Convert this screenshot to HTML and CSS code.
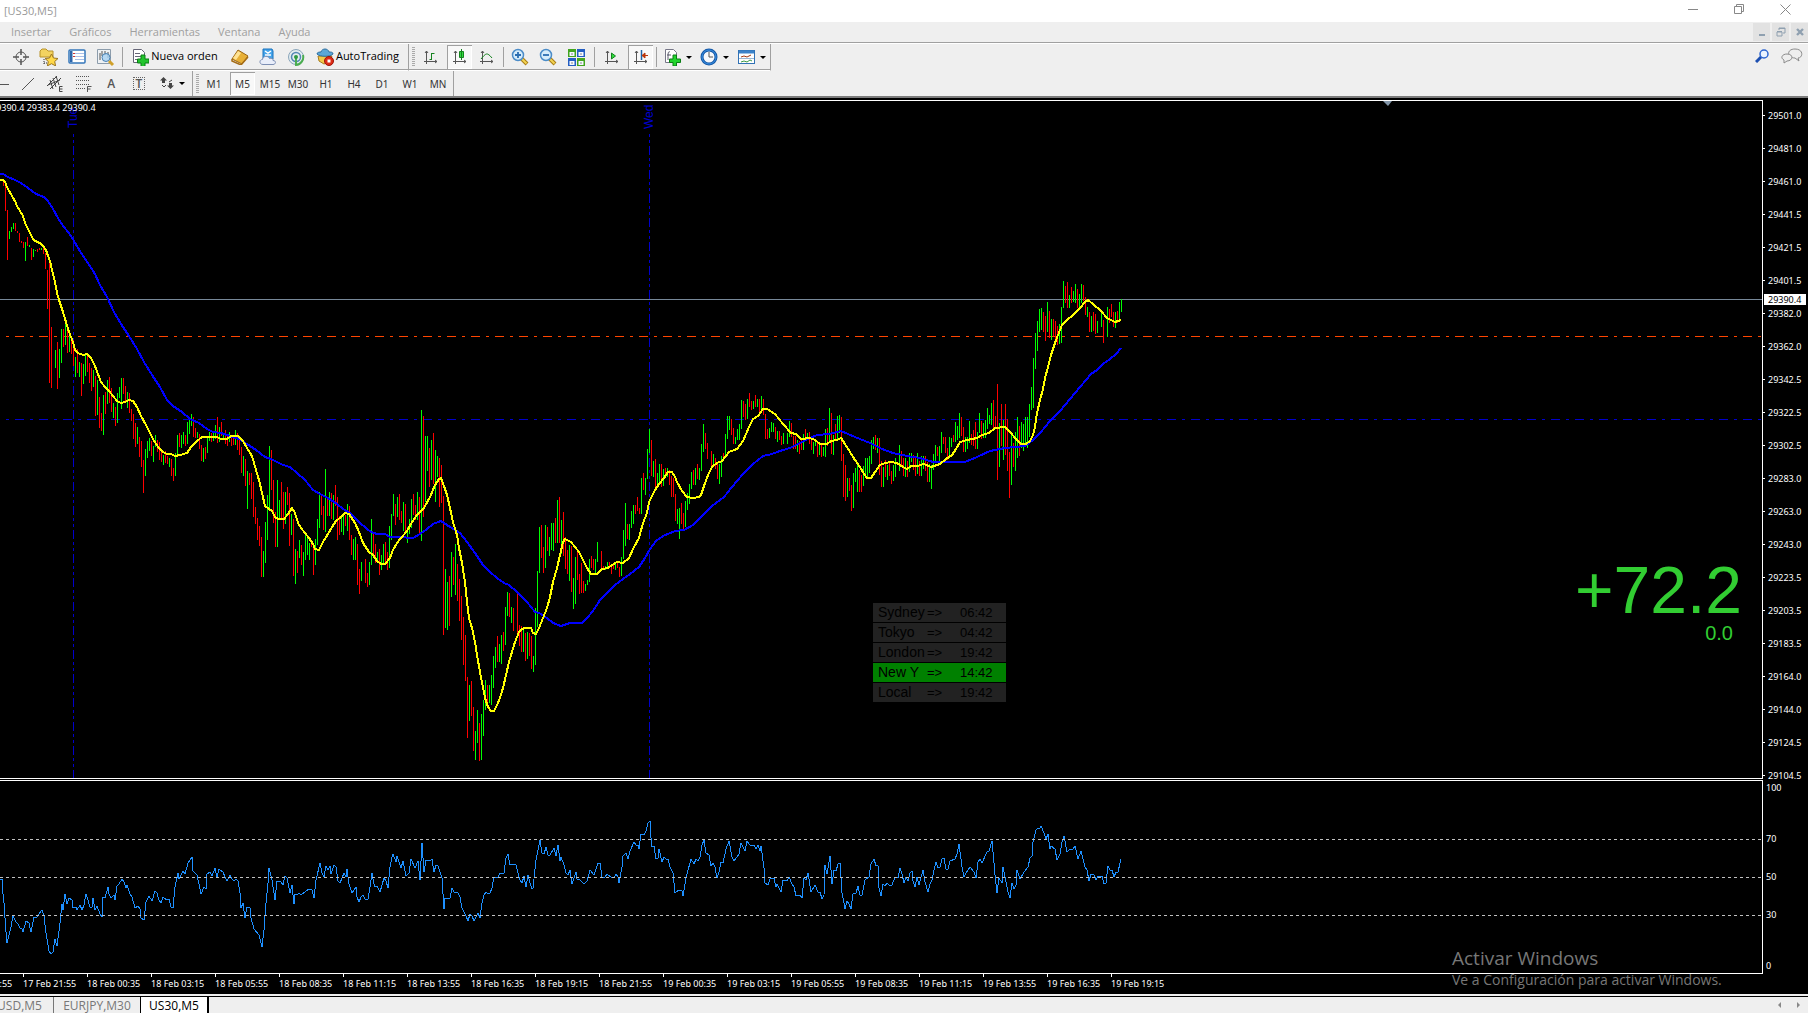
FILE: index.html
```html
<!DOCTYPE html>
<html lang="es">
<head>
<meta charset="utf-8">
<title>[US30,M5]</title>
<link rel="stylesheet" href="styles.css">
<script src="chart.js" defer></script>
</head>
<body>
<header class="titlebar">
  <span class="title">[US30,M5]</span>
  <div class="window-controls">
    <button aria-label="Minimizar"><svg width="11" height="11"><path d="M0 5.5h10"/></svg></button>
    <button aria-label="Restaurar"><svg width="11" height="11"><path d="M.5 2.5h7v7h-7zM2.500 2.500v-2h7v7h-2"/></svg></button>
    <button aria-label="Cerrar"><svg width="11" height="11"><path d="M.5.5l10 10M10.500.5l-10 10"/></svg></button>
  </div>
</header>
<nav class="menubar">
  <a href="#">Insertar</a><a href="#">Gráficos</a><a href="#">Herramientas</a><a href="#">Ventana</a><a href="#">Ayuda</a>
  <div class="mdi-controls">
    <button aria-label="Minimizar gráfico"><svg width="10" height="10"><path d="M2 8h6" stroke-width="2"/></svg></button>
    <button aria-label="Restaurar gráfico"><svg width="10" height="10"><path d="M1 5h5v4H1zM1 4.500h5M3 3V1h6v5H7M3 1.500h6"/></svg></button>
    <button aria-label="Cerrar gráfico"><svg width="10" height="10"><path d="M2 2l6 6M8 2L2 8" stroke-width="2.400"/></svg></button>
  </div>
</nav>

<div class="toolbars">
  <div class="toolrow">
    <div class="toolgroup standard">
      <button class="tool" aria-label="Cursor en cruz"><svg width="18" height="18" fill="none" stroke="#555"><circle cx="9" cy="9" r="5"/><path d="M9 1v6M9 11v6M1 9h6M11 9h6" stroke-width="1.500"/></svg></button>
      <button class="tool" aria-label="Perfiles"><svg width="20" height="18"><path d="M1 3l2-2h4l2 2h5v6H1z" fill="#f3d360" stroke="#b8932a"/><path d="M5 11v5M5 15h4" stroke="#333" stroke-dasharray="1 1"/><path d="M12.500 6l2 4 4.500.5-3.300 3 .9 4.400-4.100-2.200-4.100 2.200.9-4.400-3.300-3 4.500-.5z" fill="#ffd94a" stroke="#9a7420"/></svg></button>
      <button class="tool" aria-label="Observación del mercado"><svg width="18" height="16"><rect x="1" y="1" width="16" height="13" rx="1" fill="#fff" stroke="#3577bb" stroke-width="1.500"/><path d="M2 2h2.500v11H2z" fill="#2d66aa"/><path d="M7 4.500h9M7 7.500h9M7 10.500h9" stroke="#a9bfe8"/><path d="M5 4.500h2M5 7.500h2" stroke="#c33"/></svg></button>
      <button class="tool" aria-label="Ventana de datos"><svg width="19" height="19"><path d="M1.500 1.500h13v14h-13z" fill="#eef1f4" stroke="#8c9cab"/><path d="M4 5v7M6 3v5M9 3v4M12 4v6" stroke="#555"/><circle cx="10" cy="9.500" r="4" fill="#a7d2f2" fill-opacity=".8" stroke="#4a82b4"/><path d="M13 13l4 4" stroke="#d0a02a" stroke-width="3"/></svg></button>
      <span class="separator"></span>
      <button class="tool wide" aria-label="Nueva orden"><svg width="18" height="18"><path d="M2.500 1.500h8l3 3v10h-11z" fill="#fff" stroke="#667"/><path d="M4 5.500h5M4 8.500h6M4 11.500h4" stroke="#667"/><path d="M10 7h4v4h4v4h-4v3.500h-4V15H6.500v-4H10z" fill="#22c42d" stroke="#0b7d16"/></svg><span>Nueva orden</span></button>
      <button class="tool" aria-label="MetaEditor"><svg width="18" height="16"><path d="M1 10L7 1l10 6-6 8z" fill="#e8b037" stroke="#9a6514"/><path d="M2 9l5-7 3 2-5 7z" fill="#ffe394"/><path d="M1 10v2l9 4 7-8" fill="none" stroke="#a56c16" stroke-width="1.500"/></svg></button>
      <button class="tool" aria-label="MQL5"><svg width="18" height="18"><path d="M4 1h9l1 2v8H4z" fill="#46a4ea" stroke="#1972bd"/><path d="M6 3l3 2 3-2M6 7h6" stroke="#fff" fill="none" stroke-width="1.500"/><path d="M4 16.500c-4 0-4-5-.5-5 .5-4 6-4 7-1 2-1 4 .5 3.500 2 3.500 0 3 4 0 4z" fill="#e9eefa" stroke="#7d8fb4"/></svg></button>
      <button class="tool" aria-label="Señales"><svg width="18" height="18" fill="none"><circle cx="9" cy="9" r="7.500" fill="#e3ecef" stroke="#8ba6bb"/><circle cx="9" cy="9" r="4.500" stroke="#5488b4" stroke-width="1.500"/><path d="M9 9v8a8 8 0 0 0 7-10" stroke="#4bad50" stroke-width="2"/><circle cx="9" cy="9" r="2" fill="#2f9a43"/></svg></button>
      <button class="tool wide auto"><svg width="18" height="18"><path d="M2 8h14l-3 6-5 2-5-3z" fill="#f2c94a" stroke="#a57b1e"/><path d="M1 6c0-2 3-2 4-2 1-4 7-4 8 0 2 0 4 0 4 2-3 3-13 3-16 0z" fill="#5ba7d8" stroke="#2d6e9f"/><circle cx="13" cy="13" r="4.500" fill="#de2c17" stroke="#9d1408"/><path d="M11.500 11.500h3v3h-3z" fill="#fff"/></svg><span>AutoTrading</span></button>
    </div>
    <div class="toolgroup charts">
      <span class="grip"></span>
      <button class="tool" aria-label="Gráfico de barras"><svg class="axis" width="16" height="16"><path d="M3.500 2v13M1 12.500h13M2 4l1.500-2L5 4M12 11l2 1.500-2 1.500"/><path class="green" d="M8.500 4v7M8.500 4.500h3M6.500 10.500h2"/></svg></button>
      <button class="tool active" aria-label="Velas japonesas"><svg class="axis" width="16" height="16"><path d="M3.500 2v13M1 12.500h13M2 4l1.500-2L5 4M12 11l2 1.500-2 1.500"/><path class="green" fill="#2fdc3e" d="M9.500 0v11M7.500 2.500h4v6h-4z"/></svg></button>
      <button class="tool" aria-label="Gráfico de línea"><svg class="axis" width="16" height="16"><path d="M3.500 2v13M1 12.500h13M2 4l1.500-2L5 4M12 11l2 1.500-2 1.500"/><path class="green" d="M2 10c5-6 6-7 11-1"/></svg></button>
      <span class="separator"></span>
      <button class="tool" aria-label="Acercar"><svg width="18" height="18"><path d="M10 10l6 6" stroke="#a97d17" stroke-width="4"/><path d="M10 10l5.500 5.500" stroke="#f3d453" stroke-width="2"/><circle cx="7" cy="7" r="5.500" fill="#d5ecfb" stroke="#4b8cc8" stroke-width="1.500"/><path d="M4 7h6M7 4v6" stroke="#2b6eb2" stroke-width="1.800"/></svg></button>
      <button class="tool" aria-label="Alejar"><svg width="18" height="18"><path d="M10 10l6 6" stroke="#a97d17" stroke-width="4"/><path d="M10 10l5.500 5.500" stroke="#f3d453" stroke-width="2"/><circle cx="7" cy="7" r="5.500" fill="#d5ecfb" stroke="#4b8cc8" stroke-width="1.500"/><path d="M4 7h6" stroke="#2b6eb2" stroke-width="1.800"/></svg></button>
      <button class="tool" aria-label="Mosaico"><svg width="17" height="17"><path d="M0 0h8v8H0zM9 9h8v8H9z" fill="#42a51e"/><path d="M9 0h8v8H9zM0 9h8v8H0z" fill="#235ec2"/><path d="M1.500 3h5v4h-5zM10.500 3h5v4h-5zM1.500 12h5v4h-5zM10.500 12h5v4h-5z" fill="#f4f8ff"/><path d="M3 5h2M12 5h2M3 14h2M12 14h2" stroke="#888"/></svg></button>
      <span class="separator spaced"></span>
      <button class="tool" aria-label="Desplazamiento automático"><svg class="axis" width="16" height="16"><path d="M3.500 2v13M1 12.500h13M2 4l1.500-2L5 4M12 11l2 1.500-2 1.500"/><path class="green" fill="#2fdc3e" d="M7.500 4l4 3-4 3z"/></svg></button>
      <button class="tool active" aria-label="Desplazar gráfico"><svg class="axis" width="16" height="16"><path d="M3.500 2v13M1 12.500h13M2 4l1.500-2L5 4M12 11l2 1.500-2 1.500"/><path d="M8.500 1v10" stroke="#1c62a5" stroke-width="1.500"/><path d="M15 6.500h-5M12 4l-3 2.500L12 9z" stroke="#b93409" fill="#b93409"/></svg></button>
      <span class="separator"></span>
      <button class="tool drop" aria-label="Indicadores"><svg width="17" height="18"><path d="M1.500 1.500h8l3 3v10h-11z" fill="#fff" stroke="#778"/><path d="M6 4c-2-1-2 1-2 8M3 7h4" stroke="#556" fill="none"/><path d="M9 7h3.500v4h4v3.500h-4v3.500H9v-3.500H5.500V11H9z" fill="#22d42d" stroke="#0b7d16"/></svg><i class="caret"></i></button>
      <button class="tool drop" aria-label="Periodos"><svg width="18" height="18"><circle cx="9" cy="9" r="7" fill="#f7f9fc" stroke="#1558a6" stroke-width="3"/><circle cx="9" cy="9" r="7" fill="none" stroke="#3c93e6"/><path d="M9 4v5h4" fill="none" stroke="#555"/></svg><i class="caret"></i></button>
      <button class="tool drop" aria-label="Plantillas"><svg width="17" height="16"><rect x=".5" y="1.500" width="16" height="13" fill="#fff" stroke="#3172b5"/><path d="M1 3h15" stroke="#3b82c9" stroke-width="3"/><path d="M3 8l3-1 3 1 4-2" fill="none" stroke="#a33a13"/><path d="M1 9.500h15" stroke="#9bb7d4"/><path d="M3 13l3-1 3 1 3-2 2 1" fill="none" stroke="#3c9a43"/></svg><i class="caret"></i></button>
    </div>
    <div class="corner">
      <button class="tool" aria-label="Buscar"><svg width="15" height="14" fill="none"><path d="M1 13l6-6" stroke="#1c4fb1" stroke-width="3"/><circle cx="9" cy="5" r="4" fill="#eaf3ff" stroke="#2d66d1" stroke-width="1.500"/></svg></button>
      <button class="tool" aria-label="Comunidad"><svg width="22" height="16" fill="#eee" stroke="#8b8b8b"><path d="M14 1c9 0 8 9 3 9l1 3-4-3c-8 0-9-9 0-9z"/><path d="M6 6c7 0 6 7 0 7l-3 2v-3C-1 10 1 6 6 6z"/></svg></button>
    </div>
  </div>
  <div class="toolrow">
    <div class="toolgroup drawing">
      <button class="tool" aria-label="Línea horizontal"><svg width="16" height="16" stroke="#555"><path d="M0 8.500h16"/></svg></button>
      <button class="tool" aria-label="Línea de tendencia"><svg width="14" height="14" stroke="#555"><path d="M1 13L13 1"/></svg></button>
      <button class="tool" aria-label="Canal equidistante"><svg width="17" height="18" stroke="#444" fill="none"><path d="M0 11L10 1M3 14L14 3M3 5l3 9M6 3l3 9M9 1l3 9M1 10l12-5"/><path d="M15.500 11.500h-3v5h3M12.500 14h3"/></svg></button>
      <button class="tool" aria-label="Fibonacci"><svg width="16" height="18" stroke="#555" fill="none"><path d="M0 1.500h14M0 5.500h14M0 9.500h14M0 13.500h9" stroke-dasharray="1 1"/><path d="M11.500 17v-5.500h4M11.500 14h3"/></svg></button>
      <button class="tool letter" aria-label="Texto">A</button>
      <button class="tool letter boxed" aria-label="Etiqueta"><span>T</span></button>
      <button class="tool drop arrows" aria-label="Flechas"><svg width="14" height="13" fill="#444"><path d="M0 3.500L3.500 0 7 3.500H5V6H2V3.500zM7 8.500h2V6h3v2.500h2L10.500 12z"/><path d="M2 8l2 2 2-2M12 3L9 5" fill="none" stroke="#444"/></svg><i class="caret"></i></button>
    </div>
    <div class="toolgroup periods">
      <span class="grip"></span>
      <button>M1</button><button class="active">M5</button><button>M15</button><button>M30</button><button>H1</button><button>H4</button><button>D1</button><button>W1</button><button>MN</button>
    </div>
  </div>
</div>

<main class="workspace">
  <section class="pane price-pane">
    <div class="plot">
      <svg class="canvas" id="price">
        <path class="day" d="M73.500 33V677M649.500 33V677"/>
        <text class="day-name" transform="translate(77 27) rotate(-90)">Tue</text>
        <text class="day-name" transform="translate(653 28) rotate(-90)">Wed</text>
        <line class="level blue" x1="6" x2="100%" y1="318.500" y2="318.500"/>
        <line class="level orange" x1="6" x2="100%" y1="235.500" y2="235.500"/>
        <line class="last-price" x1="0" x2="100%" y1="198.500" y2="198.500"/>
        <path class="bars up" id="up"/><path class="bars down" id="down"/>
        <path class="average slow" id="slow"/><path class="average fast" id="fast"/>
        <path d="M1383 0h9l-4 5z" fill="#8295a8"/>
      </svg>
      <p class="ohlc">29390.4 29383.4 29390.4</p>
      <table class="sessions">
        <tr><th>Sydney</th><td>=&gt;</td><td>06:42</td></tr>
        <tr><th>Tokyo</th><td>=&gt;</td><td>04:42</td></tr>
        <tr><th>London</th><td>=&gt;</td><td>19:42</td></tr>
        <tr class="open"><th>New Y</th><td>=&gt;</td><td>14:42</td></tr>
        <tr><th>Local</th><td>=&gt;</td><td>19:42</td></tr>
      </table>
      <div class="profit"><strong>+72.2</strong><span>0.0</span></div>
    </div>
    <div class="scale">
      <ol>
        <li>29501.0</li><li>29481.0</li><li>29461.0</li><li>29441.5</li><li>29421.5</li><li>29401.5</li><li>29382.0</li><li>29362.0</li><li>29342.5</li><li>29322.5</li><li>29302.5</li><li>29283.0</li><li>29263.0</li><li>29243.0</li><li>29223.5</li><li>29203.5</li><li>29183.5</li><li>29164.0</li><li>29144.0</li><li>29124.5</li><li>29104.5</li>
      </ol>
      <span class="quote">29390.4</span>
    </div>
  </section>
  <section class="pane rsi-pane">
    <div class="plot">
      <svg class="canvas">
        <path class="rsi" id="rsi"/>
        <g class="rsi-level"><line x2="100%" y1="58.500" y2="58.500"/><line x2="100%" y1="96.500" y2="96.500"/><line x2="100%" y1="134.500" y2="134.500"/></g>
      </svg>
    </div>
    <div class="scale rsi-scale"><span>100</span><span>70</span><span>50</span><span>30</span><span>0</span></div>
  </section>
  <ol class="timeline">
    <li>17 Feb 18:55</li><li>17 Feb 21:55</li><li>18 Feb 00:35</li><li>18 Feb 03:15</li><li>18 Feb 05:55</li><li>18 Feb 08:35</li><li>18 Feb 11:15</li><li>18 Feb 13:55</li><li>18 Feb 16:35</li><li>18 Feb 19:15</li><li>18 Feb 21:55</li><li>19 Feb 00:35</li><li>19 Feb 03:15</li><li>19 Feb 05:55</li><li>19 Feb 08:35</li><li>19 Feb 11:15</li><li>19 Feb 13:55</li><li>19 Feb 16:35</li><li>19 Feb 19:15</li>
  </ol>
  <aside class="activation"><strong>Activar Windows</strong><span>Ve a Configuración para activar Windows.</span></aside>
</main>

<footer class="tabs">
  <button>USD,M5</button><button>EURJPY,M30</button><button class="current">US30,M5</button>
  <div class="tab-scroll"><button class="prev" aria-label="Anterior"></button><button class="next" aria-label="Siguiente"></button></div>
</footer>
</body>
</html>
```
FILE: styles.css
```css
* { box-sizing: border-box; }
body { margin: 0; height: 100vh; display: flex; flex-direction: column; overflow: hidden; background: #efefef; color: #000; font: 11px/16px "Open Sans", "Noto Sans", sans-serif; }
button { border: 0; padding: 0; margin: 0; background: none; font: inherit; color: inherit; display: flex; align-items: center; justify-content: center; }
ol, p { margin: 0; padding: 0; list-style: none; }
svg { display: block; flex: none; }

.titlebar { flex: none; height: 22px; background: #fff; display: flex; justify-content: space-between; color: #999; }
.title { padding: 3px 0 0 4px; }
.window-controls { display: flex; height: 18px; }
.window-controls button { width: 46px; }
.window-controls svg { fill: none; stroke: #888; }
.menubar { flex: none; height: 22px; display: flex; align-items: flex-start; gap: 18px; padding-left: 11px; color: #a0a0a0; border-bottom: 1px solid #fff; box-shadow: inset 0 -1px #a0a0a0; }
.menubar a { color: inherit; text-decoration: none; padding-top: 2px; }
.mdi-controls { margin-left: auto; display: flex; gap: 2px; padding-top: 1px; }
.mdi-controls button { width: 17px; height: 18px; background: #e2e2e2; }
.mdi-controls svg { fill: none; stroke: #8fa0b0; }

.toolbars { flex: none; border-bottom: 2px solid #7c7c7c; }
.toolrow { display: flex; height: 25px; }
.toolrow:first-child { height: 27px; }
.toolgroup { display: flex; align-items: center; border-right: 1px solid #a0a0a0; }
.toolrow:first-child .toolgroup { border-bottom: 1px solid #fff; box-shadow: inset 0 -1px #a0a0a0; }
.tool { width: 28px; height: 24px; }
.standard { width: 409px; padding-left: 7px; }
.standard .separator { margin-right: 4px; }
.separator { width: 1px; height: 20px; background: #a0a0a0; margin: 0 3px; }
.wide { width: 95px; gap: 2px; margin-right: 4px; }
.auto { margin: 0; }
.wide span { padding-bottom: 2px; }
.grip { width: 3px; height: 20px; margin-left: 3px; background: repeating-linear-gradient(#aaa 0 1px, #efefef 1px 2px); }
.charts { width: 362px; }
.charts .grip { margin-right: 2px; }
.charts .separator { margin: 0 2px; }
.charts .spaced { margin: 0 3px 0 4px; }
.active { background: #f8f8f8; box-shadow: inset 1px 1px #a0a0a0, inset -1px -1px #fff; }
.tool.active { width: 25px; margin: 0 1px 0 2px; }
.axis { fill: none; stroke: #555; }
.axis .green { stroke: #15831f; }
.drop { width: 37px; gap: 5px; }
.caret { border: 3px solid transparent; border-top-color: #000; border-bottom: 0; }
.corner { margin-left: auto; display: flex; gap: 2px; padding-right: 2px; }
.drawing { width: 193px; }
.drawing .tool:first-child { margin-left: -13px; }
.letter { font-size: 12px; font-weight: 600; color: #555; }
.boxed span { width: 12px; height: 13px; border: 1px dotted #666; line-height: 11px; }
.arrows { width: 40px; }
.periods { width: 261px; font: 10px/14px "Noto Sans", sans-serif; color: #333; }
.periods button { width: 28px; height: 23px; }
.periods .grip { margin-right: 1px; }
.periods .active { width: 25px; margin: 0 1px 0 2px; }

.workspace { flex: 1; min-height: 0; position: relative; display: flex; flex-direction: column; padding-top: 2px; background: #000; color: #fff; font: 9px/11px "Noto Sans", sans-serif; overflow: hidden; }
.pane { display: flex; }
.plot { flex: 1; min-width: 0; position: relative; border: 1px solid #fff; border-left: 0; overflow: hidden; }
.canvas { width: 100%; height: 100%; }
.scale { width: 45px; position: relative; }
.price-pane { flex: 1; min-height: 0; }
.price-pane ol { margin-top: -1px; }
.price-pane li { padding: 11px 0 11px 5px; background: linear-gradient(#fff, #fff) 0 16px / 2px 1px no-repeat; }
.price-pane li:last-child { padding-bottom: 0; }
.quote { position: absolute; left: 1px; top: 194px; width: 42px; padding-left: 4px; background: #fff; color: #000; }
.rsi-pane { flex: none; height: 194px; margin-top: 1px; }
.rsi-scale { display: grid; grid-template-rows: 51px 38px 38px 51px 11px; padding: 2px 0 0 3px; }
.timeline { flex: none; height: 20px; display: flex; margin-left: -41px; }
.timeline li { flex: none; width: 64px; height: 15px; padding: 4px 0 0; white-space: nowrap; background: linear-gradient(#fff, #fff) 0 0 / 1px 3px no-repeat; }

.day, .level, .last-price, .average, .rsi, .rsi-level { fill: none; shape-rendering: crispEdges; }
.day { stroke: #0000cd; stroke-dasharray: 9 3 3 3 3 3; stroke-dashoffset: 12px; }
.day-name { fill: #0000cd; font: 12px "Liberation Sans", sans-serif; }
.level { stroke-dasharray: 3 6 9 6; }
.blue { stroke: #0000cd; }
.orange { stroke: #ff4500; }
.last-price { stroke: #778899; }
.bars { shape-rendering: crispEdges; }
.up { fill: #00ff00; }
.down { fill: #ff0000; }
.average { stroke-width: 2; }
.slow { stroke: #0000ff; }
.fast { stroke: #ffff00; }
.rsi { stroke: #1e90ff; }
.rsi-level { stroke: #c0c0c0; stroke-dasharray: 3 3; }

.ohlc { position: absolute; left: -9px; top: 1px; white-space: nowrap; }
.sessions { position: absolute; left: 873px; top: 501px; width: 133px; border-spacing: 0 1px; color: #000; font: 14px/19px "Liberation Sans", sans-serif; }
.sessions tr { background: #222; height: 19px; }
.sessions th { width: 54px; padding: 0 0 0 5px; font-weight: 400; text-align: left; white-space: nowrap; }
.sessions td { padding: 0; font-size: 13px; }
.sessions td:nth-child(2) { width: 33px; }
.sessions .open { background: #008000; }
.profit { position: absolute; right: 20px; top: 458px; display: flex; flex-direction: column; align-items: flex-end; color: #32cd32; font: 20px/24px "Liberation Sans", sans-serif; }
.profit strong { font-weight: 400; font-size: 66px; line-height: 62px; }
.profit span { padding-right: 9px; }
.activation { position: absolute; right: 81px; bottom: 4px; width: 275px; display: flex; flex-direction: column; color: #777; font: 14px/20px "Open Sans", sans-serif; white-space: nowrap; }
.activation strong { font-weight: 400; font-size: 19px; line-height: 24px; }

.tabs { flex: none; height: 19px; display: flex; border-top: 2px solid #eee; box-shadow: inset 0 1px #000; color: #777; padding-top: 1px; font-size: 12px; }
.tabs > button { height: 16px; padding-top: 2px; }
.tabs > button:first-child { width: 54px; padding-right: 14px; border-right: 1px solid #777; }
.tabs > button:nth-child(2) { width: 86px; }
.tabs .current { width: 69px; background: #fff; color: #000; border: solid #000; border-width: 0 2px 0 1px; }
.tab-scroll { margin-left: auto; display: flex; align-items: center; gap: 16px; padding-right: 8px; }
.tab-scroll button { border: 3px solid transparent; }
.tab-scroll .prev { border-right-color: #888; border-left: 0; }
.tab-scroll .next { border-left-color: #888; border-right: 0; }
```
FILE: chart.js
```javascript
// Price bars, oldest first, one every two pixels. "r"/"g" is the direction,
// followed by high-low in thirds of a pixel from the block's own top offset.
// "-" is an interval without a visible bar.
const barBlocks = [
  { top: 177, bars: `r60-78 r78-153 r150-300 g213-237 g201-216 g189-207 r189-213 r213-219 r219-246 r243-249 r246-264 g246-303
r231-258 g255-261 r264-300 g267-291 g270-273 r267-276 r264-270 g264-270 r264-282 r279-327 r330-447 r300-669 r501-684 - g570-624
r546-687 g567-654 g507-609 r507-561 g480-555 r492-579 g525-576 r540-582 r540-618 g591-651 r567-639 g606-651 r609-708 g612-672
g585-648 r585-636 r609-669 r624-693 g630-681 r648-768 g660-765 r711-804 r759-813 g705-825 r696-762 g660-732 r651-729 r684-756
g729-774 r741-798 g699-789 g681-714 g654-747 r654-702 r678-723 g696-744 r699-759 r747-783 r762-837 r789-861 g801-852 r831-891
r843-921 r900-999 g867-948 g843-894 g834-873 r843-888 g858-906 g825-861 r840-876 r846-900 r870-906 g885-915 r873-909 r888-912
g894-921 r897-948 r924-963 g879-948 g825-882 r819-861 g825-864 g816-852 r825-858 g786-852 g777-822 g762-798 r771-831 r804-834
g816-834 r822-867 r855-903 g864-906 r861-897 g831-879 g816-843 r819-846 g819-843 g795-837 r771-849 g801-846 r786-828 g822-834
r810-852 r828-858 g816-846 r828-858 r831-855 g810-855 r819-870 r840-885 r861-939 g888-948 r897-978 g933-1047 r939-975 r939-1017
r966-1071 r1041-1092 r1074-1140 r1098-1158 r1131-1251 g1173-1251 g1086-1209 g1005-1140 g858-1050 r870-990 r960-1089 r1056-1161
g960-1161 g1020-1077 r966-1077 r996-1107 g996-1092 r981-1035 r999-1158 g1062-1125 r1077-1248 g1167-1272 r1173-1239 g1140-1194
r1155-1215 g1176-1248 g1119-1200 g1128-1185 g1149-1200 r1143-1160 r1149-1245 g1137-1215 g1077-1155 g996-1104 r1005-1065
r1038-1110 g927-1116 r1011-1068 g996-1068 r999-1077 g1005-1080 r975-1038 r1011-1140 r1068-1125 g1074-1116 g1062-1125
r1065-1098 g1032-1113 r1038-1140 r1125-1185 g1137-1200 g1131-1200 r1152-1275 r1227-1302 g1206-1263 - r1197-1269 r1239-1281
g1206-1275 g1077-1215 r1119-1185 r1152-1209 g1176-1206 r1167-1245 g1185-1230 g1152-1212 r1146-1206 r1176-1230 g1098-1224
g1062-1140 g1002-1068 r1032-1095 g1011-1071 r1002-1080 r1053-1089 g1026-1113 r1032-1113 g1101-1149 g1077-1122 g1017-1104
r1002-1065 r1035-1080 g996-1080 r1011-1119 g750-1143 r768-1071 g828-1026 g828-933 r864-981 g840-960 r819-972 g870-1026
g888-951 r894-1041 r915-1029` },
  { top: 837, bars: `r348-765 g567-744 g606-750 r588-738 g516-651 r531-615 g492-645 r552-663 r597-723 r648-780 r711-855
r765-903 r891-1074 g915-1023 r903-1008 r981-1113 g1053-1140 g990-1089 r1029-1143 g1002-1140 g960-1068 g900-990 r915-975
g915-969 g885-975 g828-924 g801-864 r768-846 g792-846 g765-852 r756-813 g681-795 g636-708 r639-711 g681-729 r684-753 -
r636-765 r735-798 r738-816 g741-816 r759-843 g756-837 r759-828 r768-867 g828-876 g684-855 g573-741 g441-579 r435-534
r501-579 g435-564 r441-513 g471-528 g429-510 g429-513 r414-489 g360-489 r351-489 g420-522 r396-528 r471-567 r510-582
g495-603 r498-636 g594-687 g531-672 r510-600 r582-642 r549-639 r603-639 g612-633 g600-615 g537-606 r528-564 r537-570
g537-579 g486-546 - r513-564 r558-570 g558-570 g546-564 r546-564 r558-582 r552-567 g546-570 r546-564 r561-591 g531-588
g450-537 g369-498 r432-477 g432-480 g393-444 g375-432 r375-402 r351-393 r384-402 g294-402 r279-330 g294-345 g207-297
g147-219 r180-288 g243-291 r237-321 g279-321 g252-312 r252-321 g267-318 r264-282 g264-291 r270-315 r288-351 r294-351
r342-423 g387-432 g384-477 r369-432 r399-447 g363-441 g339-390 g312-372 g276-327 r270-315 g264-315 r252-297 g264-300
g192-273 g132-216 r159-207 r189-237 - r213-261 g222-258 r234-267 r249-297 g252-312 g228-291 r219-237 g162-231 g108-177
g108-150 r117-165 r144-192 g171-192 g147-180 g132-180 g60-147 r63-111 r72-120 g57-117 r39-81 r63-90 g63-87 r45-81 g57-81
r57-99 g48-87 r57-105 r102-177 r147-177 g144-174 g126-156 g129-156 r141-177 g153-186 r153-180 r168-195 g159-192 -
g159-192 g123-171 r129-171 r168-207 r168-207 g180-216 r183-222 r174-210 g162-210 r147-177 g159-177 r156-192 r174-210
g186-222 g177-198 r183-231 g189-225 r189-231 g201-228 g147-231 r144-198 g84-183 r99-222 g165-225 r132-180 g108-183
g105-159 r111-243 r222-351 r255-363 g294-351 r294-333 r315-393 g279-384 g264-306 g249-336 r270-336 r285-336 g258-318
g234-291 g234-291 g228-279 g180-252 g171-207 r165-210 g174-219 r174-285 r243-321 g261-321 r240-291 g255-300 r249-288
r273-312 g255-303 g234-291 - g195-273 r213-261 r234-288 g234-291 r243-291 g219-276 g219-246 r225-270 r231-288 g219-282
r243-288 g228-288 g228-267 r228-273 r246-306 g252-306 g255-327 g222-270 g195-243 r201-228 g198-243 g156-219 r171-192
r171-219 r204-240 g171-228 g174-201 r165-186 g126-186 g138-180 g99-174 r111-168 r141-216 g171-216 g171-207 g123-189
r162-195 r150-198 r126-207 g156-207 g99-159 r123-177 g129-174 g120-174 g84-147 g105-132 g69-135 r60-144 r108-147 r12-300
g129-261 r72-198 g120-240 r72-225 r117-273 r216-354 g165-315 r189-261 g156-273 g111-234 r138-228 g126-204 g132-213
g111-192 g111-204 g72-171 g21-90` },
  { top: 507, bars: `g264-414 g189-297 g153-243 g117-186 g114-180 r126-186 r138-213 g96-186 r123-204 g147-210 r147-198
r153-207 r168-225 g162-222 g111-219 g33-114 r48-99 r36-114 g75-114 r51-99 g63-96 g42-99 r57-114 g72-117 g42-99 r45-93
r81-135 g111-141 r126-186 g138-186 r126-183 r132-192 g153-189 - g123-171 r150-219 - g111-201 r117-159 r102-141 r126-171
g126-174 r123-159 g96-150 g87-126` }
];

const paths = { g: "", r: "" };
let x = 3;
for (const block of barBlocks) {
  for (const bar of block.bars.split(/\s+/)) {
    if (bar !== "-") {
      const [high, low] = bar.slice(1).split("-").map(v => Math.round((block.top + Number(v)) / 3));
      paths[bar[0]] += `M${x} ${high}h1v${low - high}h-1z`;
    }
    x += 2;
  }
}
document.getElementById("up").setAttribute("d", paths.g);
document.getElementById("down").setAttribute("d", paths.r);

// Curves are stored in blocks, each with its origin and its units per pixel.
function drawCurve(id, blocks) {
  const points = blocks.flatMap(b => b.points.split(/\s+/).map(p => {
    const [px, py] = p.split(",").map(Number);
    return Math.round(b.x + px / b.sx) + " " + Math.round(b.y + py / 3);
  }));
  document.getElementById(id).setAttribute("d", "M" + points.join("L"));
}

drawCurve("fast", [
  { x: 0, y: 59, sx: 3, points: `0,60 10,60 16,66 22,81 28,93 34,103 40,113 46,124 52,137 60,152 68,168 76,190 84,207 92,225 98,236 106,242 114,246 122,253 130,259 138,270 145,287 150,303 156,330 164,367 172,400 180,430 188,456 198,486 208,517 218,545 226,570 234,578 248,585 262,582 272,595 284,617 294,641 304,667 314,680 328,692 340,709 350,724 362,729 374,727 386,719 398,722 412,742 424,768 438,795 450,819 462,842 476,864 490,876 500,881 512,882 524,888 540,885 560,880 574,860 590,843 606,831 650,831 662,836 682,836 694,829 714,829 730,843 742,864 756,889 768,929 778,960 786,998 796,1037 806,1048 816,1053 826,1070 834,1077 852,1077 864,1062 876,1045 886,1060 894,1088 904,1105 916,1118 926,1133 938,1152 944,1168 956,1170 970,1145 984,1122 996,1102 1008,1084 1022,1070 1036,1058 1048,1062 1066,1088 1076,1115 1090,1150 1106,1175 1118,1186 1130,1203 1142,1211 1156,1211 1170,1195 1180,1170 1190,1148 1204,1134 1220,1114 1236,1087 1252,1066 1272,1044 1290,1010 1306,975 1316,957` },
  { x: 400, y: 279, sx: 3, points: `124,293 132,318 142,346 150,385 160,425 170,465 178,505 186,550 194,605 202,665 208,715 216,745 224,787 232,825 240,875 248,920 256,955 264,980 274,992 282,992 290,975 300,955 310,925 318,885 326,845 336,815 346,785 356,757 366,747 376,743 392,745 400,758 408,763 418,745 430,715 440,685 450,650 460,605 470,565 480,525 488,485 496,477 512,486 524,500 536,515 548,540 560,565 574,581 592,581 606,567 624,563 636,555 650,546 668,548 686,535 700,507 716,475 730,430 740,400 748,365 764,330 778,312 792,295 804,277 816,276 826,290 832,307 846,332 862,350 880,354 896,352 904,344 912,318 924,285 936,262 950,248 966,243 988,217 1012,208 1028,182 1046,140 1060,118 1074,108 1090,88 1100,87 1124,103 1148,133` },
  { x: 700, y: 279, sx: 3, points: `272,160 288,163 304,177 330,175 344,180 360,191 380,191 392,183 412,181 422,174 436,193 450,215 466,239 480,262 492,281 502,293 512,294 524,275 540,254 554,250 574,246 592,249 608,260 620,267 634,259 652,257 672,251 694,261 720,252 738,236 756,224 768,206 780,187 800,179 830,173 846,165 868,160 884,144 916,141 930,157 948,178 962,191 978,191 990,182 1000,165 1006,140 1012,100 1020,60` },
  { x: 860, y: 169, sx: 3, points: `548,357 556,325 564,290 574,255 584,218 594,195 606,165 620,150 640,135 660,113 674,95 684,89 700,102 724,122 742,145 766,156 784,149` }
]);

drawCurve("slow", [
  { x: 0, y: 59, sx: 3, points: `0,42 10,42 24,50 44,61 64,70 84,84 108,101 132,112 144,124 160,147 174,173 190,198 206,218 222,243 244,280 264,310 284,343 300,375 320,410 342,455 364,492 388,528 410,566 432,606 456,645 480,682 500,720 520,737 546,755 570,776 596,790 620,808 640,816 664,820 690,828 716,838 742,853 768,869 794,891 812,896 830,907 850,915 870,922 890,938 914,960 940,990 960,1002 984,1015 1012,1032 1030,1047 1050,1060 1076,1087 1100,1107 1114,1117 1132,1122 1156,1122 1170,1130 1210,1130 1226,1134 1240,1133 1260,1123 1280,1108 1300,1092` },
  { x: 400, y: 279, sx: 3, points: `124,422 150,442 180,459 200,485 224,520 250,555 270,575 290,594 312,610 326,614 352,636 380,667 406,697 418,699 440,715 460,730 484,738 510,729 546,728 562,715 580,693 600,660 620,638 644,614 670,596 690,582 716,560 736,534 750,508 768,484 790,469 824,453 852,451 880,436 904,412 936,377 972,350 996,320 1030,283 1060,253 1090,229 1116,222 1140,213 1170,204` },
  { x: 700, y: 279, sx: 3, points: `300,188 318,180 350,164 388,163 424,152 466,170 510,190 546,207 580,219 620,227 660,235 700,245 794,245 830,230 870,214 916,204 976,197 1000,180 1024,155 1050,124 1080,93 1110,57 1140,22` },
  { x: 860, y: 169, sx: 3, points: `678,330 692,313 710,300 730,281 750,267 768,252 784,233` }
]);

drawCurve("rsi", [
  { x: 0, y: -1, sx: 2.613, points: `0,298 4,298 6,315 10,370 12,415 15,455 19,490 23,465 28,440 35,407 41,425 46,432 51,445 57,446 61,455 67,424 76,430 82,455 89,410 97,411 102,402 109,391 114,407 121,460 127,512 134,523 139,516 145,478 150,497 156,430 161,373 165,391 171,343 176,371 181,355 187,361 192,383 198,382 202,391 208,374 214,391 219,374 224,343 230,360 236,380 240,380 244,355 249,391 254,379 260,402 266,410 270,352 275,355 281,320 286,343 291,354 297,346 301,361 307,319 312,313 318,298 323,307 328,325 333,316 339,343 344,350 354,385 360,377 365,388 369,413 375,421 381,367 390,349 396,363 406,332 411,338 416,360 421,370 427,352 437,361 442,358 448,380 453,383 458,320 464,280 469,298 479,274 484,283 490,248 496,241 501,232 505,273 511,283 516,284 520,313 526,341 532,322 537,328 542,283 548,275 553,287 563,265 568,292 573,268 584,275 589,292 594,304 600,286 606,298 611,304 616,298 621,304 626,340 631,385 636,370 641,415 646,382 652,383 657,415 665,448 677,465 684,500 689,450 694,370 700,310 704,265 711,300 719,361 725,304 735,305 740,314 746,287 751,295 757,340 762,316 767,373 772,343 777,346 782,339 787,344 808,328 814,330 820,355 826,300 835,250 841,280 846,291 851,259 856,271 861,257 866,283 872,256 877,262 883,304 888,310 898,280 903,290 908,268 913,313 919,338 929,322 934,352 939,367 944,350 949,346 954,358 961,358 966,320 971,280 976,313 981,320 986,317 992,335 1003,293 1008,304 1013,325 1018,262 1023,232 1028,223 1034,247 1038,227 1044,256 1049,265 1054,244 1060,287 1070,280 1075,238 1085,265 1091,244 1097,301 1102,190 1107,277 1114,241 1124,244 1128,236 1133,275 1139,256 1144,257 1149,277 1154,295 1159,388 1164,355 1175,355 1181,325 1186,337 1196,338 1201,352 1207,385 1217,407 1222,424 1227,401 1233,407 1238,424 1248,398 1254,413 1259,370 1264,346 1269,337 1275,343 1280,340 1285,325 1290,292 1302,290 1307,280 1317,280 1322,235 1327,221 1332,256 1342,253 1348,254 1353,280 1359,300 1363,310 1368,289 1374,320 1379,286 1385,308 1390,328 1394,323 1400,241 1410,181 1416,219 1421,221 1426,202 1431,226 1437,224 1447,205 1452,229 1457,196 1462,244 1467,232 1473,256 1479,280 1484,286 1489,271 1494,313 1504,277 1509,298 1515,299 1525,313 1535,302 1542,271 1551,286 1562,250` },
  { x: 560, y: -1, sx: 2.529, points: `100,250 105,290 115,292 120,281 130,290 137,293 141,283 146,292 150,310 156,260 160,227 166,220 171,238 177,213 187,187 192,196 197,195 201,207 206,163 212,165 217,153 222,130 227,124 229,175 232,202 237,198 242,238 247,235 251,208 257,247 262,230 267,236 272,236 277,262 285,280 292,340 300,331 308,332 312,349 318,293 332,236 338,253 343,236 348,244 353,232 358,195 363,181 370,220 378,224 383,259 388,250 393,262 398,295 403,275 408,247 413,250 419,208 428,184 434,230 439,244 452,221 459,188 469,213 474,184 480,194 490,196 495,207 500,196 505,213 509,199 515,265 519,310 525,316 530,298 540,293 545,320 550,311 560,337 565,301 575,302 580,292 587,312 591,322 596,349 601,344 608,344 611,353 616,293 621,301 627,280 636,337 646,314 652,335 657,337 662,358 667,345 671,256 676,283 682,229 687,313 692,271 697,272 702,253 707,248 712,338 717,370 722,387 727,364 732,371 737,387 742,341 748,338 753,319 758,344 763,346 772,299 781,292 787,253 793,238 798,257 803,256 808,325 813,347 818,311 823,319 828,310 834,317 840,315 848,290 854,295 859,265 864,283 869,310 875,292 879,304 884,278 889,272 894,302 899,322 904,290 909,314 919,271 924,307 930,335 935,311 940,300 945,271 950,247 955,265 960,262 965,236 970,235 975,268 980,268 986,244 1000,238 1005,223 1010,193 1016,260 1021,292 1027,278 1036,260 1046,275 1051,295 1056,245 1061,236 1067,249 1080,215 1086,213 1092,184 1097,250 1101,285 1106,340 1111,293 1117,308 1121,262 1126,290 1132,335 1137,355 1142,310 1147,328 1152,316 1157,271 1163,298 1173,275 1183,262 1188,235 1193,228 1197,185 1203,150 1208,145 1213,145 1217,139 1223,160 1228,178 1233,161 1238,207 1243,198 1252,208 1258,241 1264,222 1269,185 1274,169 1283,217 1290,207 1298,208 1303,197 1309,238 1318,214 1328,260 1334,270 1339,304 1344,281 1350,286 1355,301 1361,287 1370,289 1375,311 1380,310 1385,259 1390,271 1395,271 1400,290 1406,275 1411,276 1420,238` }
]);
```
